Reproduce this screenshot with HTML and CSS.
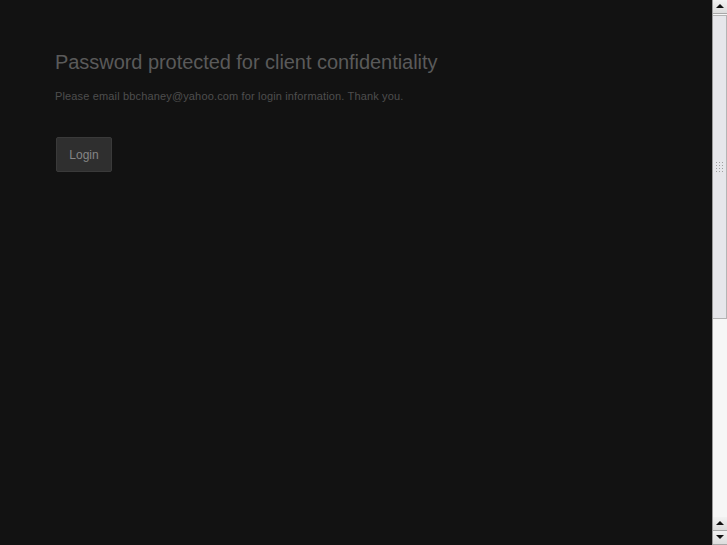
FILE: index.html
```html
<!DOCTYPE html>
<html>
<head>
<meta charset="utf-8"/>
<title>Password protected</title>
<link rel="stylesheet" href="styles.css">
</head>
<body>
<div class="frame">
  <div class="page">
    <h1 class="title">Password protected for client confidentiality</h1>
    <p class="note">Please email bbchaney@yahoo.com for login information. Thank you.</p>
    <button class="login">Login</button>
  </div>
  <div class="scrollbar">
    <div class="arrow up"></div>
    <div class="track">
      <div class="thumb"><div class="grip"></div></div>
    </div>
    <div class="arrow up"></div>
    <div class="arrow down"></div>
  </div>
</div>
</body>
</html>
```

FILE: styles.css
```css
html, body {
   margin: 0;
   padding: 0;
   height: 100%;
   background-color: #121212;
   font-family: "Liberation Sans", Arial, sans-serif;
}

.frame {
   display: flex;
   height: 545px;
}

.page {
   flex: 1;
   padding: 49px 0 0 55px;
}

.title {
   margin: 0;
   font-size: 20px;
   font-weight: normal;
   line-height: 26px;
   color: #5a5a5a;
   letter-spacing: -0.05px;
}

.note {
   margin: 14px 0 0 0;
   font-size: 11px;
   line-height: 14px;
   color: #4e4e4e;
   letter-spacing: 0.15px;
}

.login {
   display: block;
   margin: 34px 0 0 1px;
   width: 56px;
   height: 35px;
   padding: 0;
   border: 1px solid #3a3a3a;
   border-radius: 2px;
   background-color: #2f2f2f;
   color: #858585;
   font-family: "Liberation Sans", Arial, sans-serif;
   font-size: 12px;
}

/* fake gtk scrollbar */
.scrollbar {
   width: 14px;
   display: flex;
   flex-direction: column;
   background-color: #f4f4f4;
   border-left: 1px solid #9a9a9a;
}

.arrow {
   height: 13px;
   border-bottom: 1px solid #a8a8a8;
   background: linear-gradient(#f2f2f2, #dcdcdc);
   position: relative;
}

.arrow:after {
   content: "";
   position: absolute;
   left: 3px;
   top: 4px;
   border-left: 4px solid transparent;
   border-right: 4px solid transparent;
}

.arrow.up:after {
   border-bottom: 4px solid #111;
}

.arrow.down:after {
   border-top: 4px solid #111;
}

.track {
   flex: 1;
   background-color: #f6f6f6;
}

.thumb {
   height: 302px;
   margin-top: 1px;
   background-color: #e6e6ea;
   border: 1px solid #b4b4b4;
   border-left: none;
   display: flex;
   align-items: center;
   justify-content: center;
}

.grip {
   width: 9px;
   height: 13px;
   background-image: radial-gradient(#a0a0a0 0.8px, transparent 1px);
   background-size: 3px 3px;
}
```
